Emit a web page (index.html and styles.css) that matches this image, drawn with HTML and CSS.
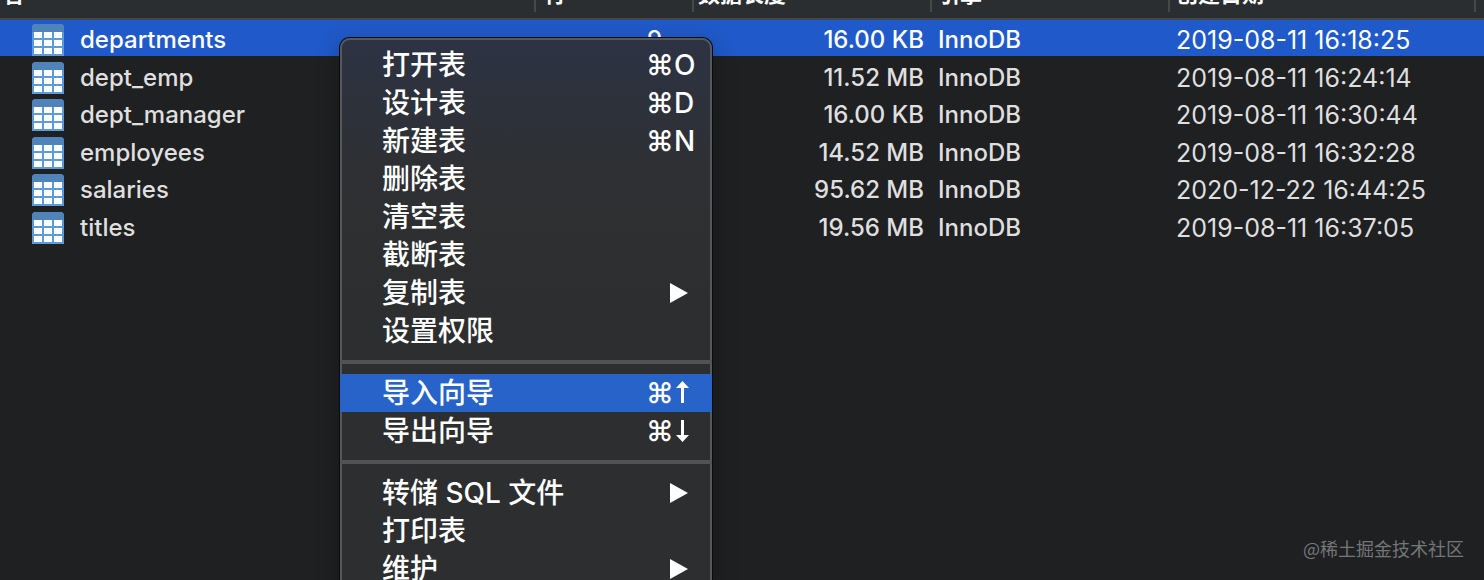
FILE: index.html
```html
<!DOCTYPE html>
<html lang="zh-CN">
<head>
<meta charset="utf-8">
<title>数据表</title>
<link rel="stylesheet" href="styles.css">
</head>
<body>
<svg class="defs" aria-hidden="true">
  <symbol id="table-icon" viewBox="0 0 32 32">
    <path d="M0 32V4a4 4 0 0 1 4-4h24a4 4 0 0 1 4 4v28z" fill="#5b9bdc"/>
    <path d="M0 8V4a4 4 0 0 1 4-4h24a4 4 0 0 1 4 4v4z" fill="#4f83b9"/>
    <path d="M2 8h8v6H2zM12 8h8v6h-8zM22 8h8v6h-8zM2 16h8v6H2zM12 16h8v6h-8zM22 16h8v6h-8zM2 24h8v6H2zM12 24h8v6h-8zM22 24h8v6h-8z" fill="#fff"/>
  </symbol>
  <symbol id="submenu-icon" viewBox="0 0 18 20">
    <path d="M0 0l18 10L0 20z" fill="#fff"/>
  </symbol>
  <symbol id="up-icon" viewBox="0 0 16 24">
    <path d="M8.500 0l6.500 7H10v15H7V7H2z" fill="#fff"/>
  </symbol>
  <symbol id="down-icon" viewBox="0 0 16 24">
    <path d="M8.500 23l6.500-7H10V1H7v15H2z" fill="#fff"/>
  </symbol>
</svg>
<main class="window">
  <table class="list">
    <colgroup>
      <col class="col-name"><col class="col-rows"><col class="col-size"><col class="col-engine"><col class="col-date"><col>
    </colgroup>
    <thead>
      <tr>
        <th><div class="head">名</div></th>
        <th><div class="head head-wide">行</div></th>
        <th><div class="head head-tight">数据长度</div></th>
        <th><div class="head">引擎</div></th>
        <th><div class="head">创建日期</div></th>
        <th><div class="head head-end"></div></th>
      </tr>
    </thead>
    <tbody>
      <tr class="selected"><td class="name"><div class="entry"><svg class="icon"><use href="#table-icon"/></svg>departments</div></td><td class="rows">9</td><td class="size">16.00 KB</td><td>InnoDB</td><td class="date">2019-08-11 16:18:25</td><td></td></tr>
      <tr><td class="name"><div class="entry"><svg class="icon"><use href="#table-icon"/></svg>dept_emp</div></td><td></td><td class="size">11.52 MB</td><td>InnoDB</td><td class="date">2019-08-11 16:24:14</td><td></td></tr>
      <tr><td class="name"><div class="entry"><svg class="icon"><use href="#table-icon"/></svg>dept_manager</div></td><td></td><td class="size">16.00 KB</td><td>InnoDB</td><td class="date">2019-08-11 16:30:44</td><td></td></tr>
      <tr><td class="name"><div class="entry"><svg class="icon"><use href="#table-icon"/></svg>employees</div></td><td></td><td class="size">14.52 MB</td><td>InnoDB</td><td class="date">2019-08-11 16:32:28</td><td></td></tr>
      <tr><td class="name"><div class="entry"><svg class="icon"><use href="#table-icon"/></svg>salaries</div></td><td></td><td class="size">95.62 MB</td><td>InnoDB</td><td class="date">2020-12-22 16:44:25</td><td></td></tr>
      <tr><td class="name"><div class="entry"><svg class="icon"><use href="#table-icon"/></svg>titles</div></td><td></td><td class="size">19.56 MB</td><td>InnoDB</td><td class="date">2019-08-11 16:37:05</td><td></td></tr>
    </tbody>
  </table>
  <div class="menu" role="menu">
    <button class="item" role="menuitem">打开表<span class="keys"><span>⌘</span><span>O</span></span></button>
    <button class="item" role="menuitem">设计表<span class="keys"><span>⌘</span><span>D</span></span></button>
    <button class="item" role="menuitem">新建表<span class="keys"><span>⌘</span><span>N</span></span></button>
    <button class="item" role="menuitem">删除表</button>
    <button class="item" role="menuitem">清空表</button>
    <button class="item" role="menuitem">截断表</button>
    <button class="item" role="menuitem">复制表<svg class="arrow"><use href="#submenu-icon"/></svg></button>
    <button class="item" role="menuitem">设置权限</button>
    <hr class="divider">
    <button class="item active" role="menuitem">导入向导<span class="keys"><span>⌘</span><svg class="key-arrow" role="img" aria-label="↑"><use href="#up-icon"/></svg></span></button>
    <button class="item" role="menuitem">导出向导<span class="keys"><span>⌘</span><svg class="key-arrow" role="img" aria-label="↓"><use href="#down-icon"/></svg></span></button>
    <hr class="divider">
    <button class="item" role="menuitem">转储 SQL 文件<svg class="arrow"><use href="#submenu-icon"/></svg></button>
    <button class="item" role="menuitem">打印表</button>
    <button class="item" role="menuitem">维护<svg class="arrow"><use href="#submenu-icon"/></svg></button>
  </div>
  <p class="credit">@稀土掘金技术社区</p>
</main>
</body>
</html>
```
FILE: styles.css
```css
* { box-sizing: border-box; }
body {
  margin: 0;
  background: #1f2022;
  color: #dfdfdf;
  font-family: Inter, "Noto Sans CJK SC", sans-serif;
}
.defs { display: none; }
.window {
  position: relative;
  height: 100vh;
  overflow: hidden;
}
.list {
  width: 100%;
  table-layout: fixed;
  border-collapse: separate;
  border-spacing: 0;
  font-size: 24px;
  font-weight: 500;
  line-height: 32px;
}
.col-name { width: 536px; }
.col-rows { width: 158px; }
.col-size { width: 238px; }
.col-engine { width: 238px; }
.col-date { width: 306px; }
th {
  height: 20px;
  padding: 0;
  background: #2b2e31;
  border-bottom: 2px solid #464749;
  vertical-align: top;
}
/* The header is scrolled partly out of view. */
.head {
  display: flex;
  align-items: flex-end;
  height: 12px;
  margin-bottom: 6px;
  padding: 0 6px 4px 6px;
  border-right: 2px solid #46484b;
  overflow: hidden;
  color: #fff;
  font-size: 22px;
  font-weight: 700;
  line-height: 28px;
  white-space: nowrap;
}
th:first-child .head { padding-left: 2px; }
.head-wide { padding-left: 8px; }
.head-tight { padding-left: 4px; }
.head-end { border-right: 0; }
td {
  height: 38px;
  padding: 4px 6px 0 6px;
  border-bottom: 2px solid #1f2022;
  vertical-align: top;
  white-space: nowrap;
}
tbody tr:nth-child(even) td {
  height: 37px;
  border-bottom-width: 1px;
}
.selected td {
  background: #2059c9;
  color: #fff;
}
td.name { padding-left: 32px; }
.entry {
  display: flex;
  gap: 16px;
}
.icon {
  width: 32px;
  height: 32px;
}
td.rows { padding-right: 32px; text-align: right; }
td.size { padding-right: 8px; text-align: right; }
td.date {
  font-size: 25px;
  font-weight: 400;
}
.menu {
  position: absolute;
  top: 38px;
  left: 340px;
  width: 372px;
  padding: 6px 0;
  border: 2px solid #56585b;
  border-radius: 10px;
  background: linear-gradient(#2d3344, #2e3033 130px, #2d2e2f 260px);
  background-origin: border-box;
  box-shadow: 0 0 0 1px #0b0b0c, 0 8px 24px rgb(0 0 0 / 30%);
}
.item {
  display: flex;
  align-items: center;
  justify-content: space-between;
  width: 100%;
  height: 38px;
  padding: 0 20px 0 40px;
  border: 0;
  background: none;
  color: #fff;
  font-family: inherit;
  font-size: 28px;
  font-weight: 500;
  line-height: 38px;
  text-align: left;
}
.item.active {
  width: auto;
  min-width: calc(100% + 4px);
  margin: 0 -2px;
  padding: 0 22px 0 42px;
  background: #2763c9;
}
.keys {
  display: grid;
  grid-template-columns: 28px 20px;
  align-items: center;
  margin-right: -4px;
}
.key-arrow {
  width: 16px;
  height: 24px;
}
.arrow {
  width: 18px;
  height: 20px;
  margin-right: 2px;
}
.divider {
  height: 4px;
  margin: 10px -2px;
  border: 0;
  background: #525355;
}
.credit {
  position: absolute;
  right: 20px;
  bottom: 18px;
  margin: 0;
  color: #757677;
  font-family: "Noto Sans CJK SC", sans-serif;
  font-size: 18px;
  line-height: 28px;
}
```
